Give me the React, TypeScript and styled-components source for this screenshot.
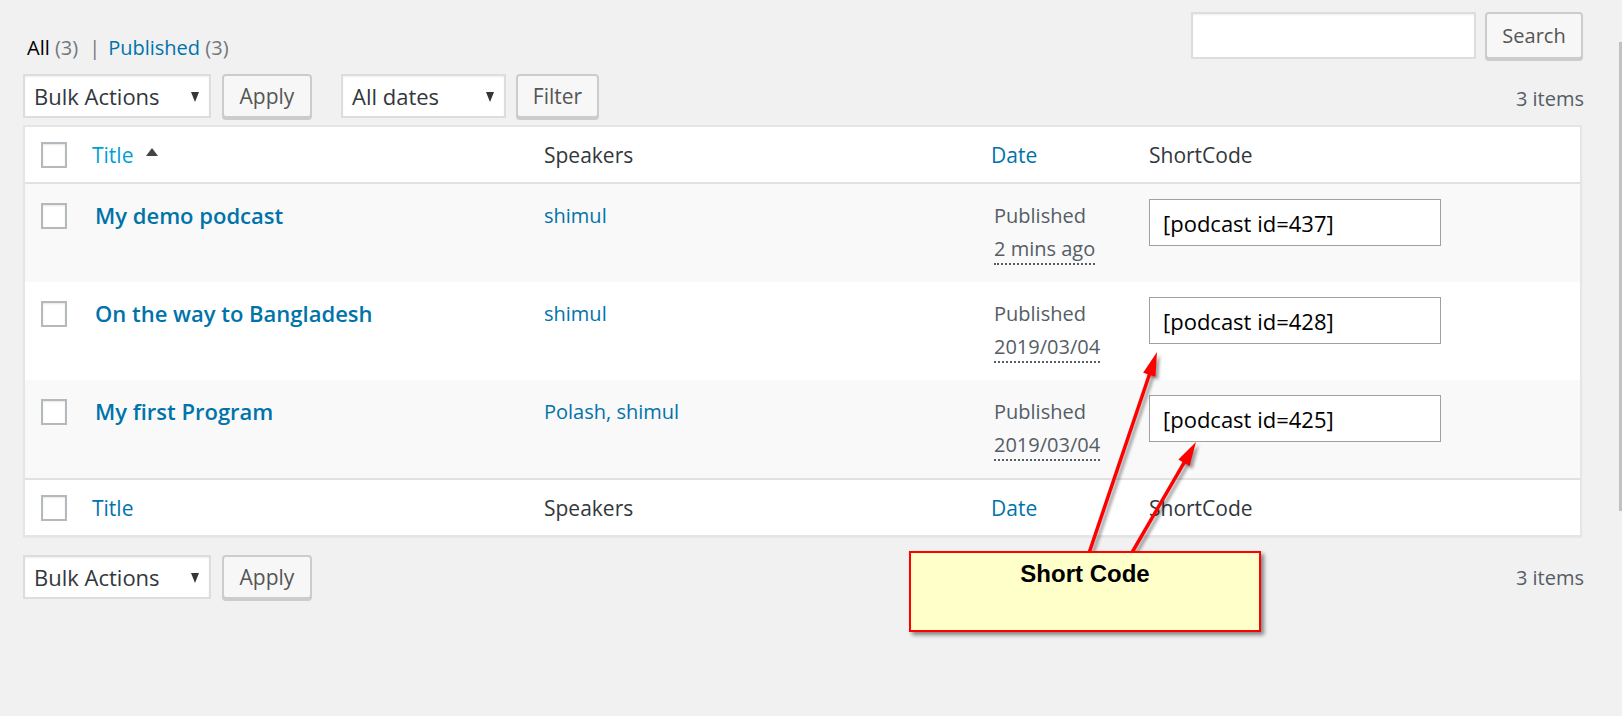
import React from 'react';
import styled, { createGlobalStyle } from 'styled-components';

const GlobalStyle = createGlobalStyle`
  html, body {
    margin: 0;
    padding: 0;
    background: #f1f1f1;
  }
  body {
    font-family: 'Open Sans', 'Noto Sans', sans-serif;
    font-size: 20px;
    color: #32373c;
  }
  * { box-sizing: border-box; }
`;

const Page = styled.div`
  position: relative;
  width: 1622px;
  height: 716px;
  overflow: hidden;
  padding: 12px 39px 0 23px;
`;

// =====================
// Top bar: status links + search
// =====================

const TopBar = styled.div`
  display: flex;
  justify-content: space-between;
  align-items: flex-start;
  height: 47px;
`;

const StatusLinks = styled.div`
  margin-top: 21px;
  padding-left: 4px;
  line-height: 30px;
  font-size: 20px;
  color: #72777c;
  display: flex;
  gap: 5px;
`;

const StatusItem = styled.span<{ $current?: boolean }>`
  color: ${p => (p.$current ? '#000' : '#0073aa')};
`;

const Count = styled.span`
  color: #72777c;
`;

const Sep = styled.span`
  color: #72777c;
  margin: 0 3px 0 6px;
`;

const SearchBox = styled.div`
  display: flex;
  gap: 9px;
`;

const SearchInput = styled.input`
  width: 285px;
  height: 47px;
  border: 2px solid #ddd;
  background: #fff;
  box-shadow: inset 0 1px 2px rgba(0, 0, 0, 0.07);
  outline: none;
`;

// =====================
// Table nav
// =====================

const TableNav = styled.div<{ $top?: number }>`
  display: flex;
  align-items: flex-start;
  height: 46px;
  margin-top: ${p => p.$top ?? 0}px;
`;

const SelectBox = styled.div<{ $width: number; $gap?: number }>`
  width: ${p => p.$width}px;
  height: 44px;
  margin-left: ${p => p.$gap ?? 0}px;
  background: #fff;
  border: 2px solid #ddd;
  box-shadow: inset 0 1px 2px rgba(0, 0, 0, 0.07);
  display: flex;
  align-items: center;
  justify-content: space-between;
  padding: 0 10px 0 9px;
  font-size: 22px;
  color: #32373c;
  white-space: nowrap;
`;

const Caret = styled.span`
  flex: none;
  width: 0;
  height: 0;
  border-left: 4.5px solid transparent;
  border-right: 4.5px solid transparent;
  border-top: 10px solid #32373c;
  margin-top: 2px;
`;

const Button = styled.button<{ $width: number; $gap?: number; $size?: number }>`
  width: ${p => p.$width}px;
  height: 44px;
  margin-left: ${p => p.$gap ?? 0}px;
  background: #f7f7f7;
  border: 2px solid #ccc;
  border-radius: 4px;
  box-shadow: 0 2px 0 #ccc;
  color: #555;
  font-family: inherit;
  font-size: ${p => p.$size ?? 21}px;
  padding: 0;
  cursor: pointer;
`;

const ItemCount = styled.span<{ $top: number }>`
  margin-left: auto;
  margin-right: -1px;
  margin-top: ${p => p.$top}px;
  line-height: 30px;
  font-size: 20px;
  color: #555d66;
`;

// =====================
// List table
// =====================

const ListTable = styled.table`
  width: 1559px;
  margin-top: 5px;
  border: 2px solid #e5e5e5;
  border-spacing: 0;
  table-layout: fixed;
  background: #fff;
  box-shadow: 0 1px 1px rgba(0, 0, 0, 0.04);
`;

const HeadCell = styled.th<{ $sortable?: boolean }>`
  height: 57px;
  padding: 0 ${p => (p.$sortable ? 12 : 15)}px;
  text-align: left;
  font-weight: 400;
  font-size: 21px;
  color: #32373c;
  vertical-align: middle;
`;

const HeadRow = styled.tr<{ $foot?: boolean }>`
  & > th {
    ${p => (p.$foot ? 'border-top: 2px solid #e1e1e1;' : 'border-bottom: 2px solid #e1e1e1;')}
  }
`;

const CheckHead = styled.th`
  padding: 0 0 0 16px;
  vertical-align: middle;
  text-align: left;
`;

const SortLink = styled.a<{ $active?: boolean }>`
  color: ${p => (p.$active ? '#00a0d2' : '#0073aa')};
  text-decoration: none;
  display: inline-flex;
  align-items: center;
`;

const SortArrow = styled.span`
  width: 0;
  height: 0;
  border-left: 6px solid transparent;
  border-right: 6px solid transparent;
  border-bottom: 8px solid #444;
  margin-left: 13px;
  margin-top: -6px;
`;

const Row = styled.tr<{ $alt?: boolean }>`
  background: ${p => (p.$alt ? '#f9f9f9' : '#fff')};
`;

const Cell = styled.td`
  padding: 15px 15px 17px;
  vertical-align: top;
  line-height: 33px;
  font-size: 20px;
  color: #555d66;
`;

const CheckCell = styled.td`
  padding: 19px 0 0 16px;
  vertical-align: top;
`;

const Checkbox = styled.input.attrs({ type: 'checkbox' })`
  appearance: none;
  -webkit-appearance: none;
  display: block;
  margin: 0;
  width: 26px;
  height: 26px;
  border: 2px solid #b4b9be;
  background: #fff;
  box-shadow: inset 0 1px 2px rgba(0, 0, 0, 0.1);
`;

const RowTitle = styled.a`
  color: #0073aa;
  font-weight: 600;
  font-size: 22px;
  text-decoration: none;
`;

const SpeakerLink = styled.a`
  color: #0073aa;
  text-decoration: none;
`;

const DateAbbr = styled.abbr`
  text-decoration: none;
  border-bottom: 2px dotted #555d66;
  padding-bottom: 1px;
`;

const ShortcodeInput = styled.input`
  display: block;
  width: 292px;
  height: 47px;
  border: 1px solid #a0a0a0;
  background: #fff;
  padding: 0 0 0 13px;
  font-family: inherit;
  font-size: 22px;
  color: #000;
  outline: none;
`;

// =====================
// Annotation overlay
// =====================

const Callout = styled.div`
  position: absolute;
  left: 909px;
  top: 551px;
  width: 352px;
  height: 81px;
  background: #ffffc9;
  border: 2px solid #ff0000;
  box-shadow: 3px 3px 4px rgba(0, 0, 0, 0.45);
  text-align: center;
  padding-top: 7px;
  font-family: 'Liberation Sans', Arial, sans-serif;
  font-weight: 700;
  font-size: 24px;
  color: #000;
  z-index: 3;
`;

const ArrowLayer = styled.svg`
  position: absolute;
  left: 0;
  top: 0;
  width: 1622px;
  height: 716px;
  pointer-events: none;
  z-index: 2;
`;

const ScrollThumb = styled.div`
  position: absolute;
  right: 0;
  top: 42px;
  width: 3px;
  height: 469px;
  background: #c1c1c1;
`;

const posts = [
  { id: 437, title: 'My demo podcast', speakers: ['shimul'], date: '2 mins ago' },
  { id: 428, title: 'On the way to Bangladesh', speakers: ['shimul'], date: '2019/03/04' },
  { id: 425, title: 'My first Program', speakers: ['Polash', 'shimul'], date: '2019/03/04' },
];

const arrows = [
  { x1: 1088, y1: 556, x2: 1157, y2: 352 },
  { x1: 1130, y1: 556, x2: 1196, y2: 442 },
];

function Arrow({ x1, y1, x2, y2, shadow }: { x1: number; y1: number; x2: number; y2: number; shadow?: boolean }) {
  const dx = x2 - x1;
  const dy = y2 - y1;
  const len = Math.hypot(dx, dy);
  const ux = dx / len;
  const uy = dy / len;
  const L = 24;
  const W = 13;
  const bx = x2 - ux * L;
  const by = y2 - uy * L;
  const nx = -uy * (W / 2);
  const ny = ux * (W / 2);
  const head = `${x2},${y2} ${bx + nx},${by + ny} ${bx - nx},${by - ny}`;
  const color = shadow ? 'rgba(0,0,0,0.35)' : '#ff0000';
  const off = shadow ? 3 : 0;
  return (
    <g transform={`translate(${off},${off})`} filter={shadow ? 'url(#blur)' : undefined}>
      <line x1={x1} y1={y1} x2={bx + ux * 4} y2={by + uy * 4} stroke={color} strokeWidth={3.5} />
      <polygon points={head} fill={color} />
    </g>
  );
}

const ColumnGroup = () => (
  <colgroup>
    <col style={{ width: 55 }} />
    <col style={{ width: 449 }} />
    <col style={{ width: 450 }} />
    <col style={{ width: 155 }} />
    <col />
  </colgroup>
);

const HeaderRow = ({ foot }: { foot?: boolean }) => (
  <HeadRow $foot={foot}>
    <CheckHead>
      <Checkbox />
    </CheckHead>
    <HeadCell $sortable>
      <SortLink $active={!foot}>
        Title
        {!foot && <SortArrow />}
      </SortLink>
    </HeadCell>
    <HeadCell>Speakers</HeadCell>
    <HeadCell $sortable>
      <SortLink>Date</SortLink>
    </HeadCell>
    <HeadCell>ShortCode</HeadCell>
  </HeadRow>
);

export default function App() {
  return (
    <>
      <GlobalStyle />
      <Page>
        <TopBar>
          <StatusLinks>
            <span>
              <StatusItem $current>All</StatusItem> <Count>(3)</Count>
            </span>
            <Sep>|</Sep>
            <span>
              <StatusItem>Published</StatusItem> <Count>(3)</Count>
            </span>
          </StatusLinks>
          <SearchBox>
            <SearchInput />
            <Button $width={98} $size={20} style={{ height: 47 }}>Search</Button>
          </SearchBox>
        </TopBar>

        <TableNav $top={15}>
          <SelectBox $width={188}>
            Bulk Actions <Caret />
          </SelectBox>
          <Button $width={90} $gap={11}>Apply</Button>
          <SelectBox $width={165} $gap={29}>
            All dates <Caret />
          </SelectBox>
          <Button $width={83} $gap={10}>Filter</Button>
          <ItemCount $top={10}>3 items</ItemCount>
        </TableNav>

        <ListTable>
          <ColumnGroup />
          <thead>
            <HeaderRow />
          </thead>
          <tbody>
            {posts.map((p, i) => (
              <Row key={p.id} $alt={i % 2 === 0}>
                <CheckCell>
                  <Checkbox />
                </CheckCell>
                <Cell>
                  <RowTitle>{p.title}</RowTitle>
                </Cell>
                <Cell>
                  {p.speakers.map((s, j) => (
                    <React.Fragment key={s}>
                      {j > 0 && <SpeakerLink>, </SpeakerLink>}
                      <SpeakerLink>{s}</SpeakerLink>
                    </React.Fragment>
                  ))}
                </Cell>
                <Cell>
                  Published
                  <br />
                  <DateAbbr>{p.date}</DateAbbr>
                </Cell>
                <Cell>
                  <ShortcodeInput readOnly value={`[podcast id=${p.id}]`} />
                </Cell>
              </Row>
            ))}
          </tbody>
          <tfoot>
            <HeaderRow foot />
          </tfoot>
        </ListTable>

        <TableNav $top={18}>
          <SelectBox $width={188}>
            Bulk Actions <Caret />
          </SelectBox>
          <Button $width={90} $gap={11}>Apply</Button>
          <ItemCount $top={8}>3 items</ItemCount>
        </TableNav>

        <ArrowLayer viewBox="0 0 1622 716">
          <defs>
            <filter id="blur" x="-20%" y="-20%" width="140%" height="140%">
              <feGaussianBlur stdDeviation="1.5" />
            </filter>
          </defs>
          {arrows.map((a, i) => (
            <Arrow key={`s${i}`} {...a} shadow />
          ))}
          {arrows.map((a, i) => (
            <Arrow key={i} {...a} />
          ))}
        </ArrowLayer>
        <Callout>Short Code</Callout>
        <ScrollThumb />
      </Page>
    </>
  );
}
